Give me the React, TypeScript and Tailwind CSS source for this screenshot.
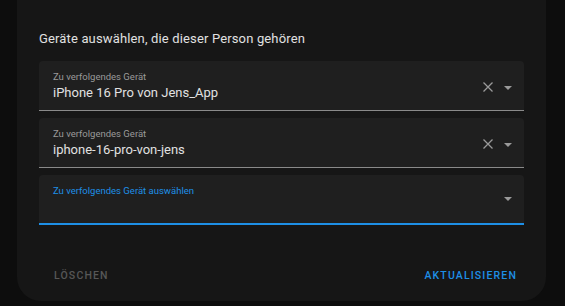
import { ReactNode } from 'react';

function ClearIcon() {
  return (
    <svg width="10" height="10" viewBox="0 0 10 10" className="shrink-0">
      <path d="M0.5 0.5 L9.5 9.5 M9.5 0.5 L0.5 9.5" stroke="#9a9a9a" strokeWidth="1.3" fill="none" />
    </svg>
  );
}

function ArrowIcon() {
  return (
    <svg width="8" height="4" viewBox="0 0 8 4" className="shrink-0">
      <path d="M0 0 L8 0 L4 4 Z" fill="#9a9a9a" />
    </svg>
  );
}

function Field({ label, value, focused }: { label: string; value?: string; focused?: boolean }) {
  return (
    <div
      className={`relative h-[50px] rounded-t-[4px] bg-[#1f1f1f] flex items-start ${
        focused ? 'border-b-2 border-[#1e8fe6]' : 'border-b border-[#8a8a8a]'
      }`}
    >
      <div className="flex-1 pl-[14px] pt-[10px]">
        <div className={`text-[9.5px] leading-[12px] ${focused ? 'text-[#1e8fe6]' : 'text-[#9a9a9a]'}`}>{label}</div>
        {value && <div className="mt-[2px] text-[13px] leading-[16px] text-[#e1e1e1]">{value}</div>}
      </div>
      <div className="flex items-center gap-[11px] pr-[12px] pt-[21px]">
        {value && <ClearIcon />}
        <div className="pt-[1px]">
          <ArrowIcon />
        </div>
      </div>
    </div>
  );
}

function Section({ children }: { children: ReactNode }) {
  return <div className="flex flex-col gap-[7px]">{children}</div>;
}

export default function App() {
  return (
    <div className="w-[565px] h-[306px] bg-[#0d0d0d] pl-[17px] overflow-hidden" style={{ fontFamily: 'Roboto, "Liberation Sans", sans-serif' }}>
      <div className="w-[529px] h-[301px] bg-[#161616] rounded-b-[24px] px-[22px] pt-[29px] flex flex-col">
        <div className="text-[13px] leading-[20px] text-[#e1e1e1] tracking-[0.15px]">Geräte auswählen, die dieser Person gehören</div>
        <div className="mt-[12px]">
          <Section>
            <Field label="Zu verfolgendes Gerät" value="iPhone 16 Pro von Jens_App" />
            <Field label="Zu verfolgendes Gerät" value="iphone-16-pro-von-jens" />
            <Field label="Zu verfolgendes Gerät auswählen" focused />
          </Section>
        </div>
        <div className="mt-auto mb-[18px] flex items-center justify-between px-[15px]">
          <button className="text-[10.5px] leading-[14px] font-medium tracking-[1.15px] text-[#575757]">LÖSCHEN</button>
          <button className="text-[10.5px] leading-[14px] font-medium tracking-[1.15px] text-[#1e8fe6] -mr-[8px]">AKTUALISIEREN</button>
        </div>
      </div>
    </div>
  );
}
